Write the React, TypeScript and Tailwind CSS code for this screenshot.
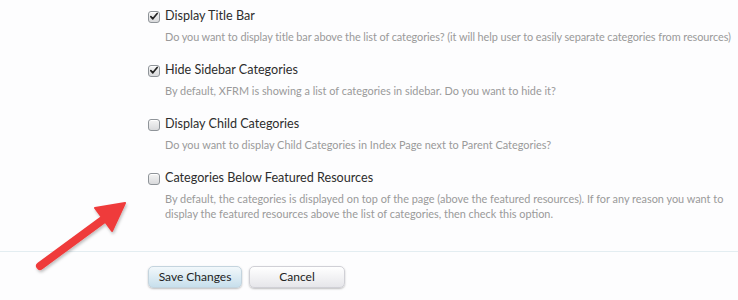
const options = [
  {
    title: "Display Title Bar",
    checked: true,
    tight: true,
    desc: ["Do you want to display title bar above the list of categories? (it will help user to easily separate categories from resources)"],
  },
  {
    title: "Hide Sidebar Categories",
    checked: true,
    tight: false,
    desc: ["By default, XFRM is showing a list of categories in sidebar. Do you want to hide it?"],
  },
  {
    title: "Display Child Categories",
    checked: false,
    tight: false,
    desc: ["Do you want to display Child Categories in Index Page next to Parent Categories?"],
  },
  {
    title: "Categories Below Featured Resources",
    checked: false,
    tight: false,
    desc: [
      "By default, the categories is displayed on top of the page (above the featured resources). If for any reason you want to",
      "display the featured resources above the list of categories, then check this option.",
    ],
  },
];

function Box({ checked }: { checked: boolean }) {
  return (
    <span className="relative flex h-[12px] w-[12px] shrink-0 items-center justify-center rounded-[3px] border border-[#8f9499] bg-gradient-to-b from-[#f4f4f4] to-[#d9dadc] shadow-[inset_0_1px_0_#fff]">
      {checked && (
        <svg viewBox="0 0 12 12" className="h-[11px] w-[11px]">
          <path d="M2.2 6.2 L4.6 8.8 L9.8 2.4" fill="none" stroke="#222" strokeWidth="2" strokeLinecap="round" strokeLinejoin="round" />
        </svg>
      )}
    </span>
  );
}

export default function App() {
  return (
    <div className="relative h-[300px] w-[738px] overflow-hidden bg-[#fdfdfe] font-['Lato',sans-serif]">
      <div className="flex flex-col gap-[18px] pl-[148px] pt-[8px]">
        {options.map((o) => (
          <div key={o.title} className="flex flex-col">
            <div className="flex h-[17px] items-center gap-[5px]">
              <Box checked={o.checked} />
              <span className="text-[12.6px] text-[#2d2d2d]">{o.title}</span>
            </div>
            <div
              className={
                o.tight
                  ? "whitespace-nowrap pl-[17px] pt-[4px] text-[10.9px] leading-[15px] tracking-[-0.08px] text-[#9a9a9a]"
                  : "whitespace-nowrap pl-[17px] pt-[4px] text-[10.9px] leading-[15px] text-[#9a9a9a]"
              }
            >
              {o.desc.map((d) => (
                <p key={d}>{d}</p>
              ))}
            </div>
          </div>
        ))}
      </div>

      <div className="mt-[30px] border-t border-[#e3edf1]" />

      <div className="flex gap-[7px] pl-[148px] pt-[14px]">
        <button className="h-[22px] w-[94px] rounded-[5px] border border-[#c4d4de] bg-gradient-to-b from-[#f2f8fb] to-[#c7dfec] text-[12px] text-[#222] shadow-[0_1px_2px_rgba(0,0,0,0.25)]">
          Save Changes
        </button>
        <button className="h-[22px] w-[96px] rounded-[5px] border border-[#d0d0d6] bg-gradient-to-b from-[#ffffff] to-[#e6e6ea] text-[12px] text-[#222] shadow-[0_1px_2px_rgba(0,0,0,0.25)]">
          Cancel
        </button>
      </div>

      <svg className="pointer-events-none absolute left-0 top-0" width="738" height="300" viewBox="0 0 738 300">
        <defs>
          <filter id="sh" x="-20%" y="-20%" width="140%" height="140%">
            <feDropShadow dx="1" dy="2" stdDeviation="1.5" floodColor="#000" floodOpacity="0.25" />
          </filter>
        </defs>
        <g filter="url(#sh)">
          <line x1="40" y1="266" x2="104" y2="219" stroke="#ef3b3b" strokeWidth="8" strokeLinecap="round" />
          <polygon points="125,203 95,208 112,231" fill="#ef3b3b" stroke="#ef3b3b" strokeWidth="2" strokeLinejoin="round" />
        </g>
      </svg>
    </div>
  );
}
